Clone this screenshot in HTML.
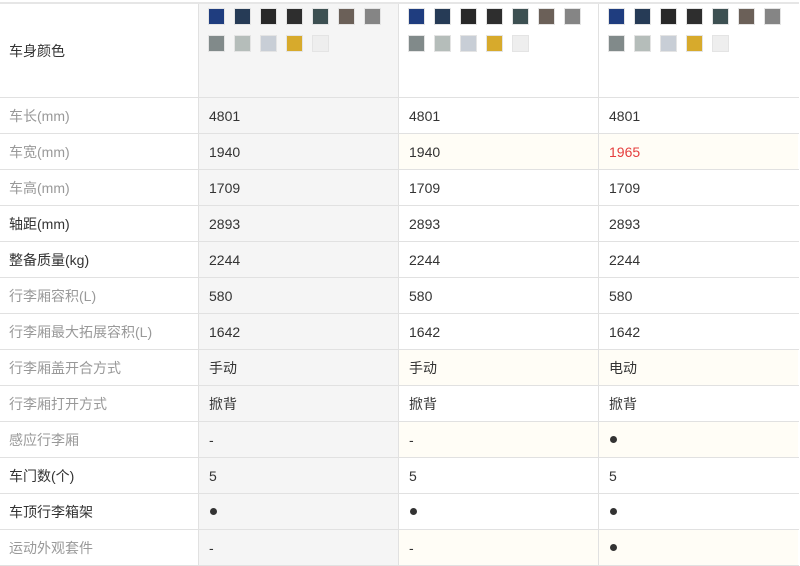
<!DOCTYPE html><html><head><meta charset="utf-8"><style>
*{margin:0;padding:0;box-sizing:border-box}
body{width:800px;height:564px;overflow:hidden;background:#fff;font-family:"Liberation Sans","Noto Sans CJK SC",sans-serif;font-size:14px;color:#333}
.r{position:absolute;left:0;width:799px;border-bottom:1px solid #e1e1e1}
.c{position:absolute;top:0;bottom:0;border-left:1px solid #e1e1e1;padding-left:10px;display:flex;align-items:center}
.l{position:absolute;left:9px;top:0;bottom:0;display:flex;align-items:center}
.g{color:#999}
.sw{position:absolute;width:17px;height:17px;border:1px solid #e4e4e4}
.dot{display:inline-block;width:7px;height:7px;border-radius:50%;background:#333;margin-left:1px}
</style></head><body>
<div style="position:absolute;left:0;top:2px;width:799px;height:2px;background:#e6e6e6"></div>
<div id="t"></div>
<script>
var rows=[["车身颜色",0,null,0],["车长(mm)",1,["4801","4801","4801"],0],["车宽(mm)",1,["1940","1940","<span style='color:#e53e3e'>1965</span>"],1],["车高(mm)",1,["1709","1709","1709"],0],["轴距(mm)",0,["2893","2893","2893"],0],["整备质量(kg)",0,["2244","2244","2244"],0],["行李厢容积(L)",1,["580","580","580"],0],["行李厢最大拓展容积(L)",1,["1642","1642","1642"],0],["行李厢盖开合方式",1,["手动","手动","电动"],1],["行李厢打开方式",1,["掀背","掀背","掀背"],0],["感应行李厢",1,["-","-","D"],1],["车门数(个)",0,["5","5","5"],0],["车顶行李箱架",0,["D","D","D"],0],["运动外观套件",1,["-","-","D"],1]];
var cols=["#1f3d7f","#263b56","#282828","#2e2e2e","#3d5052","#6b6058","#858585","#818a8a","#b5bdba","#c8ced6","#d7aa2c","#eeeeee"];
var h="";var y=4;
rows.forEach(function(r,i){var hh=i==0?94:36;
h+='<div class="r" style="top:'+y+'px;height:'+hh+'px">';
h+='<div class="l'+(r[1]?' g':'')+'">'+r[0]+'</div>';
for(var k=0;k<3;k++){var x=198+k*200;var bg=k==0?'#f5f5f5':(r[3]?'#fffdf6':'#fff');
h+='<div class="c" style="left:'+x+'px;width:200px;background:'+bg+'">';
if(r[2]){var v=r[2][k];h+=v=="D"?'<span class="dot"></span>':v;}
else{cols.forEach(function(c,j){var sx=9+(j%7)*26,sy=(j<7?4:31);h+='<div class="sw" style="left:'+sx+'px;top:'+sy+'px;background:'+c+'"></div>';});}
h+='</div>';}
h+='</div>';y+=hh;});
document.getElementById("t").innerHTML=h;
</script>
</body></html>
